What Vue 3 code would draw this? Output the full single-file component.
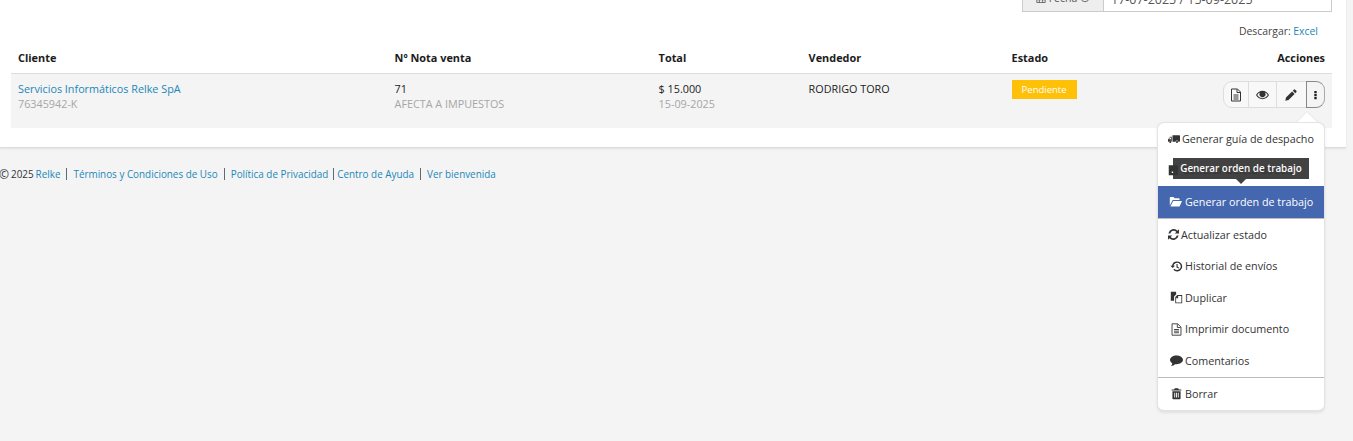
<script setup>
const items = [
  { label: 'Generar guía de despacho', icon: 'truck', kind: 'tight' },
  { label: 'Generar boleta directa', icon: 'bill', kind: 'tight' },
  { label: 'Generar orden de trabajo', icon: 'folder', kind: 'active' },
  { label: 'Actualizar estado', icon: 'refresh', kind: 'tighter' },
  { label: 'Historial de envíos', icon: 'history' },
  { label: 'Duplicar', icon: 'files' },
  { label: 'Imprimir documento', icon: 'file' },
  { label: 'Comentarios', icon: 'comment' },
  { label: 'Borrar', icon: 'trash', kind: 'divided' },
]
const icons = {
  truck: 'M6 3h9a1 1 0 0 1 1 1v6.500a1 1 0 0 1-1 1h-1.200a2 2 0 0 0-3.800 0H6zM5 5v6.500h-.2a2 2 0 0 0-3.600 0H0V8.500L3 5zM3.300 6 1.200 8.200H4V6zM3 10.500a1.400 1.400 0 1 1 0 2.800 1.400 1.400 0 0 1 0-2.800zm9 0a1.400 1.400 0 1 1 0 2.800 1.400 1.400 0 0 1 0-2.800z',
  bill: 'M1 1.500h12V15H1zM5 10h4v2H5z',
  folder: 'M1 13V3.500C1 3 1.400 2.500 2 2.500h3.500L7 4h5c.6 0 1 .4 1 1v1.200H4.500L1 13zm.8 1 3.400-6.600H16L13 14z',
  refresh: 'M14.800 1.500v5.300H9.500l2-2A4.400 4.400 0 0 0 4 6.700H1.700A6.700 6.700 0 0 1 13 3.300zM1.200 14.500V9.200h5.300l-2 2A4.400 4.400 0 0 0 12 9.300h2.300A6.700 6.700 0 0 1 3 12.700z',
  history: 'M8.800 1.800a6.200 6.200 0 1 1-4.700 10.300l1.200-1.300a4.500 4.500 0 1 0-1-3.800h1.900L3.300 9.900.4 7h2a6.300 6.300 0 0 1 6.400-5.200zM8 5h1.400v3.200l2 1.300-.7 1.100L8 9.100z',
  files: 'M1 1h6.500v2.300L8 3.800 5 6.800V12H1zM9 5h6v10H6.500V7.500zm-.8 2.300L7.500 8h.7zM10 6v3H7.500v5H14V6z',
  comment: 'M8 1.800c4.300 0 8 2.400 8 5.400s-3.700 5.400-8 5.400c-.6 0-1.300 0-1.900-.1C4.900 13.600 3 14.500 1.200 14.600c.9-.9 1.500-1.900 1.600-3.200C1 10.400 0 8.900 0 7.200 0 4.200 3.700 1.800 8 1.800z',
  trash: 'M6 1.500h4l1 1.500h3v1.400H2V3h3zM3 5.200h10V14a1 1 0 0 1-1 1H4a1 1 0 0 1-1-1zM5.300 7v6h1.100V7zm2.200 0v6h1.100V7zm2.100 0v6h1.100V7z',
}
</script>

<template>
  <div class="page">
    <section class="card">
      <div class="filter">
        <span class="addon">
          <svg class="cal" viewBox="0 0 12 12"><path d="M1 2.500h10v9H1zM1 5h10M4 5v6.500M8 5v6.500M1 8h10" fill="none" stroke="#555" /></svg>
          Fecha
          <svg class="cal" viewBox="0 0 12 12"><circle cx="6" cy="6" r="4.500" fill="none" stroke="#555" /></svg>
        </span>
        <span class="range">17-07-2025 / 15-09-2025</span>
      </div>
      <div class="download">Descargar: <a>Excel</a></div>
      <div class="table">
        <div class="head row">
          <div>Cliente</div>
          <div>Nº Nota venta</div>
          <div>Total</div>
          <div>Vendedor</div>
          <div>Estado</div>
          <div class="right">Acciones</div>
        </div>
        <div class="body row">
          <div><a>Servicios Informáticos Relke SpA</a><small>76345942-K</small></div>
          <div>71<small>AFECTA A IMPUESTOS</small></div>
          <div>$ 15.000<small>15-09-2025</small></div>
          <div>RODRIGO TORO</div>
          <div><span class="badge">Pendiente</span></div>
          <div class="actions">
            <div class="group">
              <button>
                <svg viewBox="0 0 12 14" width="12" height="14"><path d="M1.500 1h6l3 3v9h-9zM7 1.500V4.500h3M3.500 7h5M3.500 9h5M3.500 11h5" fill="none" stroke="#333" stroke-width="1" /></svg>
              </button>
              <button>
                <svg viewBox="0 0 14 10" width="13" height="10"><path fill-rule="evenodd" fill="#333" d="M7 .5c3 0 5.500 2 7 4.500-1.500 2.500-4 4.500-7 4.500S1.500 7.500 0 5C1.500 2.500 4 .5 7 .5zM1.300 5C2.600 6.900 4.700 8.400 7 8.400s4.400-1.500 5.700-3.400C12 3.900 11 3 9.800 2.300a3.300 3.300 0 1 1-5.600 0C3 3 2 3.900 1.300 5z" /></svg>
              </button>
              <button class="pencil">
                <svg viewBox="0 0 12 12" width="12" height="12"><path fill="#333" d="M8.800.7a1 1 0 0 1 1.400 0l1.100 1.100a1 1 0 0 1 0 1.400l-1 1L7.800 1.700zM7.100 2.400l2.500 2.500L3.500 11 .3 11.700 1 8.500z" /></svg>
              </button>
              <button class="more">
                <svg viewBox="0 0 4 12" width="3" height="10"><path fill="#222" d="M.4.500h3.200v3H.4zM.4 4.500h3.200v3H.4zM.4 8.500h3.200v3H.4z" /></svg>
              </button>
            </div>
          </div>
        </div>
      </div>
    </section>

    <footer class="footer">
      <span class="copy">©</span><span class="year">2025</span><a>Relke</a><i class="sep"></i><a>Términos y Condiciones de Uso</a><i class="sep"></i><a>Política de Privacidad</a><i class="sep narrow"></i><a>Centro de Ayuda</a><i class="sep"></i><a>Ver bienvenida</a>
    </footer>

    <div class="menu">
      <span class="caret"></span>
      <div
        v-for="item in items"
        :key="item.label"
        class="item"
        :class="item.kind"
      >
        <svg v-if="item.icon === 'file'" class="ico" viewBox="0 0 16 16"><path d="M2.500 1h7l4 4v10h-11zM9 1.500V5.500h4M5 8h6M5 10h6M5 12h6" fill="none" stroke="#444" stroke-width="1.200" /></svg>
        <svg v-else class="ico" viewBox="0 0 16 16"><path :d="icons[item.icon]" fill="currentColor" fill-rule="evenodd" /></svg>
        <span>{{ item.label }}</span>
      </div>
    </div>

    <div class="tooltip">Generar orden de trabajo</div>
  </div>
</template>

<style>
html, body { margin: 0; background: #f4f4f4; overflow: hidden; }
</style>

<style scoped>
.page {
  position: relative;
  width: 1353px;
  height: 441px;
  overflow: hidden;
  background: #f4f4f4;
  font-family: "Open Sans", sans-serif;
  font-size: 10.8px;
  color: #222;
}
a { color: #1b87b8; }
.card {
  display: flow-root;
  width: 1346px;
  height: 148px;
  box-sizing: border-box;
  background: #fff;
  border-bottom: 1px solid #dcdcdc;
  box-shadow: 0 1px 2px rgba(0, 0, 0, .08);
  padding: 0 14px 0 11px;
}
.filter {
  display: flex;
  justify-content: flex-end;
  height: 25px;
  margin-top: -13px;
}
.addon, .range {
  box-sizing: border-box;
  border: 1px solid #ccc;
  display: flex;
  align-items: center;
}
.addon {
  width: 81px;
  gap: 3px;
  justify-content: center;
  background: #eee;
  color: #555;
  border-right: 0;
  padding-bottom: 3px;
  font-size: 10.5px;
}
.range {
  width: 229px;
  padding-left: 7px;
  padding-bottom: 1px;
  font-size: 12.5px;
  color: #555;
}
.cal { width: 10px; height: 10px; }
.download {
  margin-top: 12px;
  height: 24px;
  line-height: 14px;
  text-align: right;
  padding-right: 14px;
  font-size: 10.4px;
  color: #444;
}
.row { display: grid; grid-template-columns: 376.6px 264px 150px 203px 1fr 120px; }
.row > div { padding: 0 7px; min-width: 0; }
.head {
  height: 26px;
  box-sizing: border-box;
  line-height: 19px;
  font-weight: 700;
  font-size: 10.9px;
  border-bottom: 1px solid #ddd;
  color: #1c1c1c;
}
.right { text-align: right; }
.body {
  height: 54px;
  background: #f4f4f4;
  padding-top: 7px;
  box-sizing: border-box;
  line-height: 15px;
}
small {
  display: block;
  font-size: 10.8px;
  color: #a6a6a6;
}
.badge {
  display: block;
  width: 65px;
  height: 19px;
  margin-top: -1px;
  line-height: 19px;
  text-align: center;
  background: #ffc107;
  color: #fff;
  font-size: 9.5px;
}
.actions { display: flex; justify-content: flex-end; }
.group {
  display: flex;
  height: 27px;
  box-sizing: border-box;
  border: 1px solid #ddd;
  border-radius: 9px;
  background: #f8f8f8;
}
.group button {
  display: flex;
  align-items: center;
  justify-content: center;
  width: 28px;
  padding: 0;
  border: 0;
  border-right: 1px solid #ddd;
  background: transparent;
}
.group button:first-child { width: 25px; }
.group .pencil { width: 29px; border-right: 0; padding-right: 2px; }
.group .more {
  width: 19px;
  border: 1px solid #888;
  border-right-color: #aaa;
  border-radius: 0 9px 9px 0;
  margin: -1px -1px -1px 0;
  background: #f4f4f4;
}
.footer {
  display: flex;
  align-items: center;
  height: 14px;
  margin-top: 19px;
  font-size: 9.9px;
  white-space: nowrap;
  color: #333;
}
.copy { margin-left: -1px; width: 12px; font-size: 12px; }
.year { margin-right: 2px; }
.sep {
  display: block;
  flex: none;
  width: 1px;
  height: 12px;
  background: #5d6b78;
  margin: 0 6px;
}
.sep.narrow { margin: 0 3px 0 5px; }
.menu {
  position: absolute;
  left: 1157px;
  top: 122px;
  width: 168px;
  box-sizing: border-box;
  background: #fff;
  border: 1px solid #e3e3e3;
  border-bottom-width: 2px;
  border-radius: 7px;
  box-shadow: 0 1px 3px rgba(0, 0, 0, .08);
}
.caret {
  position: absolute;
  top: -12px;
  right: 6px;
  width: 0;
  height: 0;
  border: 11px solid transparent;
  border-top: 0;
  border-bottom: 11px solid #e3e3e3;
}
.caret::after {
  content: "";
  position: absolute;
  left: -10px;
  top: 1px;
  border: 10px solid transparent;
  border-top: 0;
  border-bottom: 10px solid #fff;
}
.item {
  display: flex;
  align-items: center;
  height: 31.6px;
  padding-left: 12px;
  gap: 2px;
  font-size: 10.75px;
  color: #333;
}
.item.tight { padding-left: 10px; gap: 2px; }
.item.tight .ico { width: 12px; height: 12px; }
.item.tighter { padding-left: 9px; gap: 1px; }
.item.active {
  background: #4467b0;
  color: #fff;
  padding-left: 11px;
  gap: 3px;
  border-bottom: 1px solid #bbb;
}
.item.divided { border-top: 1px solid #bbb; height: 32.4px; }
.ico { width: 13px; height: 13px; flex: none; }
.tooltip {
  position: absolute;
  left: 1173px;
  top: 158px;
  width: 136px;
  height: 21px;
  line-height: 21px;
  text-align: center;
  background: #333;
  opacity: .92;
  color: #fff;
  font-size: 9.9px;
  font-weight: 600;
}
.tooltip::after {
  content: "";
  position: absolute;
  left: 63px;
  top: 21px;
  border: 5px solid transparent;
  border-bottom: 0;
  border-top: 5px solid #333;
}
</style>
